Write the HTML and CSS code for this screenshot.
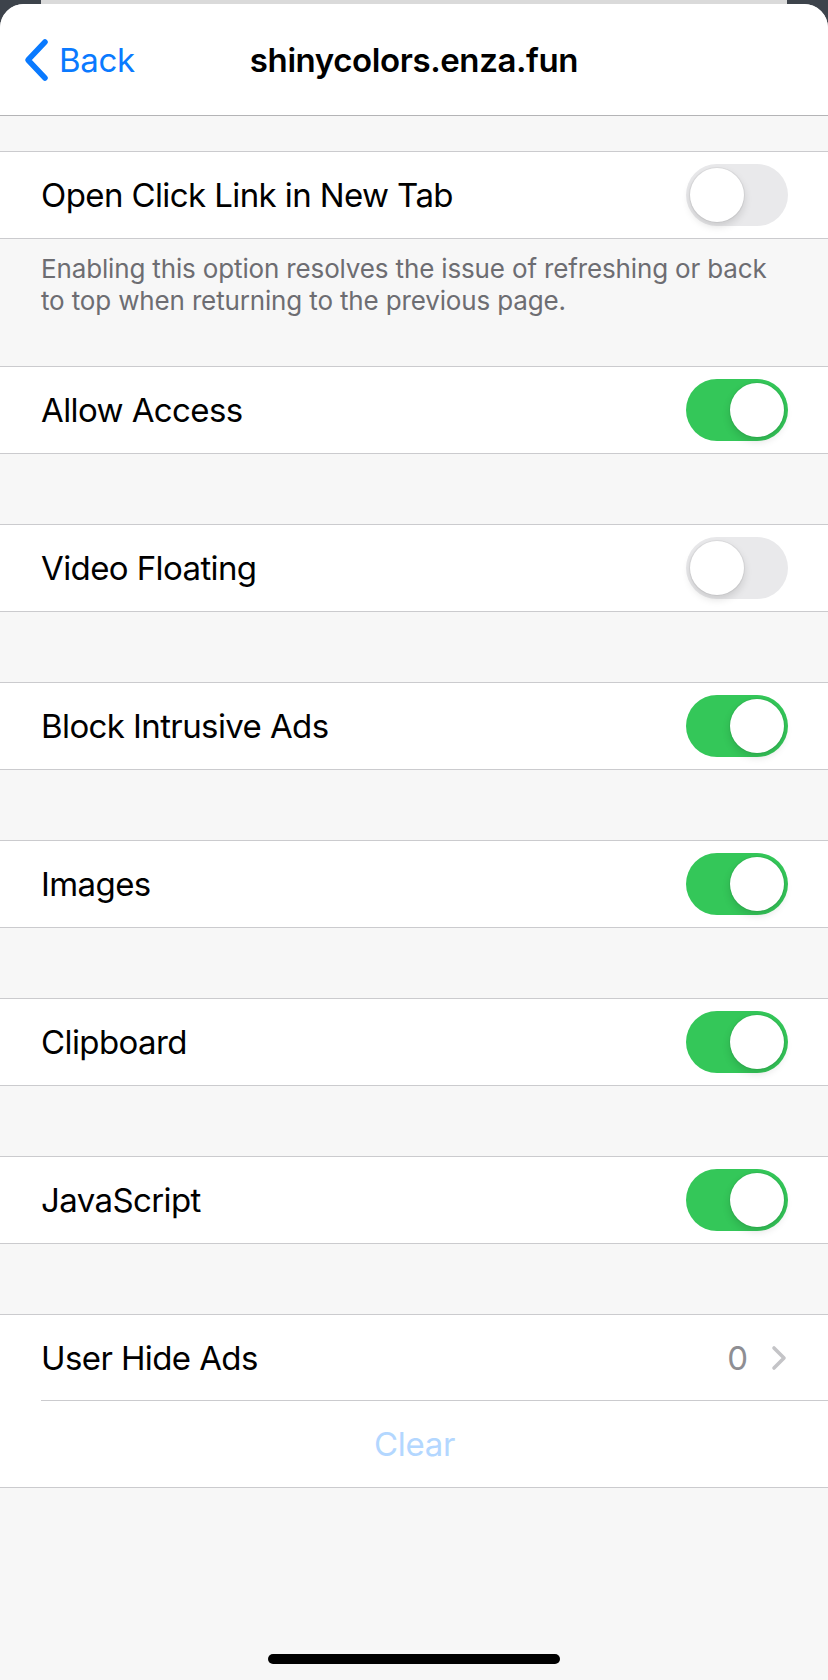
FILE: index.html
```html
<!DOCTYPE html>
<html lang="en">
<head>
<meta charset="utf-8">
<title>shinycolors.enza.fun</title>
<link rel="stylesheet" href="styles.css">
</head>
<body>
<div class="stage">
  <div class="peek"></div>
  <div class="sheet">
    <header class="nav">
      <a class="back" href="#">
        <svg class="back-icon" width="26" height="44" viewBox="0 0 26 44" aria-hidden="true">
          <path d="M21 4 L4 22 L21 40" fill="none" stroke="#0a7aff" stroke-width="5.5" stroke-linecap="round" stroke-linejoin="round"/>
        </svg>
        <span>Back</span>
      </a>
      <h1 class="title">shinycolors.enza.fun</h1>
      <div class="nav-spacer"></div>
    </header>

    <main class="content">
      <section class="group group-first">
        <div class="row">
          <span class="label">Open Click Link in New Tab</span>
          <span class="switch"><span class="knob"></span></span>
        </div>
      </section>
      <p class="footer">Enabling this option resolves the issue of refreshing or back to top when returning to the previous page.</p>

      <section class="group">
        <div class="row">
          <span class="label">Allow Access</span>
          <span class="switch on"><span class="knob"></span></span>
        </div>
      </section>

      <section class="group spaced">
        <div class="row">
          <span class="label">Video Floating</span>
          <span class="switch"><span class="knob"></span></span>
        </div>
      </section>

      <section class="group spaced">
        <div class="row">
          <span class="label">Block Intrusive Ads</span>
          <span class="switch on"><span class="knob"></span></span>
        </div>
      </section>

      <section class="group spaced">
        <div class="row">
          <span class="label">Images</span>
          <span class="switch on"><span class="knob"></span></span>
        </div>
      </section>

      <section class="group spaced">
        <div class="row">
          <span class="label">Clipboard</span>
          <span class="switch on"><span class="knob"></span></span>
        </div>
      </section>

      <section class="group spaced">
        <div class="row">
          <span class="label">JavaScript</span>
          <span class="switch on"><span class="knob"></span></span>
        </div>
      </section>

      <section class="group spaced">
        <div class="row row-link">
          <span class="label">User Hide Ads</span>
          <span class="detail">
            <span class="count">0</span>
            <svg class="chev" width="16" height="26" viewBox="0 0 16 26" aria-hidden="true">
              <path d="M3 3 L13 13 L3 23" fill="none" stroke="#c4c4c7" stroke-width="3.6" stroke-linecap="round" stroke-linejoin="round"/>
            </svg>
          </span>
        </div>
        <div class="row row-action">
          <span class="action disabled">Clear</span>
        </div>
      </section>
    </main>

    <div class="home-bar"></div>
  </div>
</div>
</body>
</html>
```

FILE: styles.css
```css
* { box-sizing: border-box; }

html, body {
  margin: 0;
  padding: 0;
  height: 100%;
}

body {
  background: #3d434b;
  font-family: Inter, "Noto Sans", "Liberation Sans", sans-serif;
  color: #000;
}

.stage {
  display: flex;
  flex-direction: column;
  height: 100%;
}

.peek {
  height: 4px;
  margin: 0 41px;
  background: #dadada;
  flex: none;
}

.sheet {
  flex: 1;
  display: flex;
  flex-direction: column;
  background: #f7f7f7;
  border-radius: 24px 24px 0 0;
  overflow: hidden;
}

/* Navigation bar */
.nav {
  display: grid;
  grid-template-columns: 1fr auto 1fr;
  align-items: center;
  height: 112px;
  background: #fff;
  border-bottom: 1px solid #b4b4b6;
  flex: none;
}

.back {
  display: flex;
  align-items: center;
  gap: 9px;
  padding-left: 24px;
  color: #0a7aff;
  text-decoration: none;
  font-size: 33px;
  letter-spacing: -0.3px;
}

.back-icon { display: block; }

.title {
  margin: 0;
  font-size: 33px;
  font-weight: 600;
  letter-spacing: -0.4px;
  text-align: center;
}

/* Content */
.content {
  display: flex;
  flex-direction: column;
}

.group {
  background: #fff;
  border-top: 1px solid #cbcbce;
  border-bottom: 1px solid #cbcbce;
}

.group-first { margin-top: 35px; }
.group.spaced { margin-top: 70px; }

.row {
  display: flex;
  align-items: center;
  justify-content: space-between;
  height: 86px;
  padding: 0 40px 0 41px;
}

.label {
  font-size: 33px;
  letter-spacing: -0.6px;
}

.footer {
  margin: 0;
  padding: 14px 44px 49px 41px;
  font-size: 26px;
  line-height: 32px;
  color: #6d6d72;
  letter-spacing: -0.15px;
}

/* Switch */
.switch {
  position: relative;
  width: 102px;
  height: 62px;
  border-radius: 31px;
  background: #e9e9eb;
  flex: none;
}

.switch .knob {
  position: absolute;
  top: 4px;
  left: 4px;
  width: 54px;
  height: 54px;
  border-radius: 50%;
  background: #fff;
  box-shadow: 0 0 0 1px rgba(0, 0, 0, 0.05), 0 4px 8px rgba(0, 0, 0, 0.14);
}

.switch.on { background: #34c759; }
.switch.on .knob { left: 44px; }

/* Disclosure row */
.row-link .detail {
  display: flex;
  align-items: center;
  gap: 23px;
  margin-right: 1px;
}

.count {
  font-size: 33px;
  color: #8e8e93;
}

.chev { display: block; }

.row-action {
  justify-content: center;
}

.row-link {
  border-bottom: 1px solid #cbcbce;
  margin-left: 41px;
  padding-left: 0;
}

.action {
  font-size: 33px;
  letter-spacing: -0.3px;
}

.action.disabled { color: #b3d7ff; }

/* Home indicator */
.home-bar {
  margin: auto auto 16px;
  width: 292px;
  height: 10px;
  border-radius: 5px;
  background: #000;
  flex: none;
}
```
